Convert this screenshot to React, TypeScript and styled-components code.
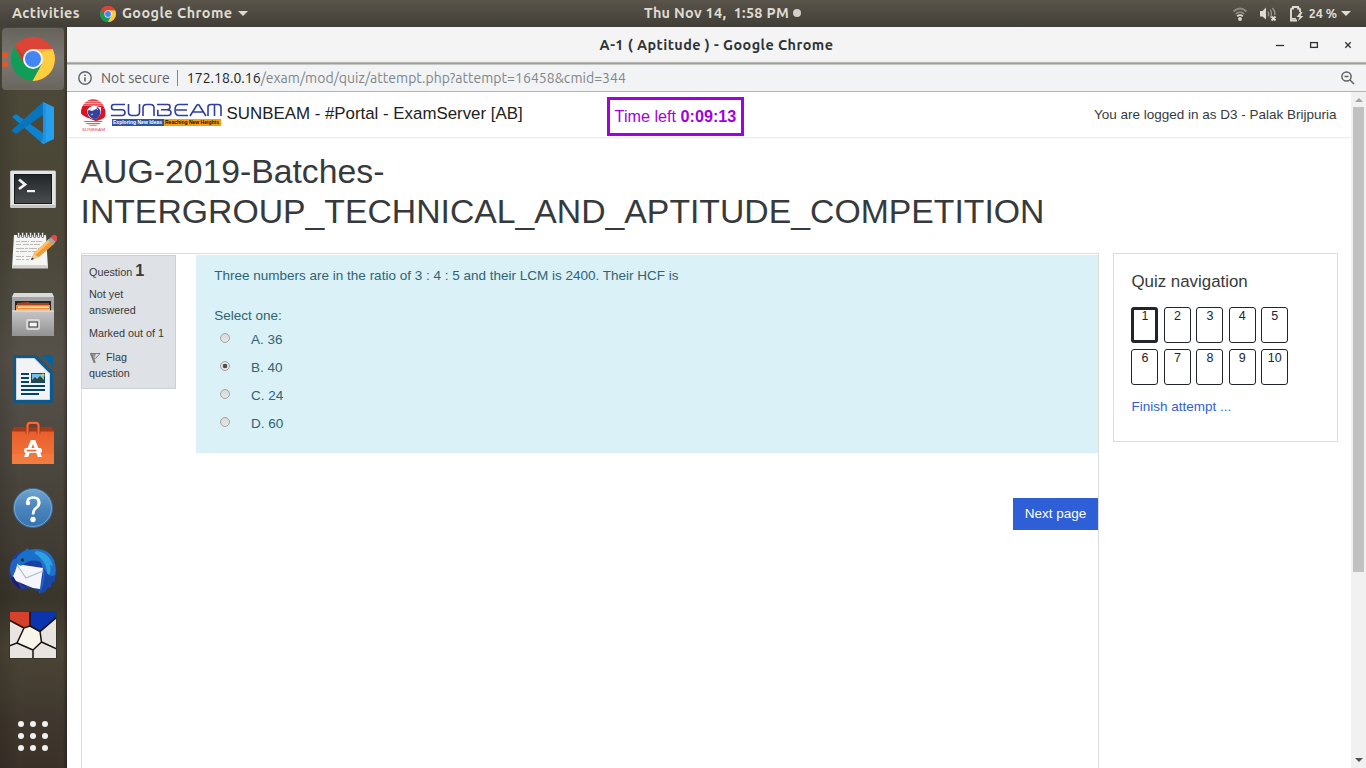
import React from 'react';
import styled, { createGlobalStyle } from 'styled-components';

const Global = createGlobalStyle`
  *, *::before, *::after { box-sizing: border-box; }
  html, body { margin: 0; padding: 0; overflow: hidden; }
`;

const ui = `'Ubuntu', 'Noto Sans', sans-serif`;
const web = `'Liberation Sans', Arial, sans-serif`;

const Desktop = styled.div`
  width: 1366px;
  height: 768px;
  display: flex;
  flex-direction: column;
  overflow: hidden;
  background: #4b473b;
`;

const TopBar = styled.header`
  flex: 0 0 27px;
  display: grid;
  grid-template-columns: 1fr auto 1fr;
  align-items: center;
  padding: 0 15px 0 12px;
  background: linear-gradient(#5a554b, #403e37);
  color: #dfdbd2;
  font: 700 14.4px/25px ${ui};
  white-space: nowrap;
`;

const BarGroup = styled.div<{ $end?: boolean; $shift?: number }>`
  display: flex;
  align-items: center;
  justify-content: ${p => (p.$end ? 'flex-end' : 'flex-start')};
  height: 27px;
  margin-left: ${p => p.$shift ?? 0}px;
`;

const BarText = styled.span<{ $ls?: string; $size?: number }>`
  letter-spacing: ${p => p.$ls ?? '0'};
  font-size: ${p => p.$size ?? 14.4}px;
`;

const Gap = styled.span<{ $w: number }>`
  flex: 0 0 ${p => p.$w}px;
`;

const Caret = styled.i<{ $ml: number }>`
  margin-left: ${p => p.$ml}px;
  border: 5px solid transparent;
  border-top-color: #dfdbd2;
  border-bottom: 0;
`;

const Dot = styled.i`
  width: 8px;
  height: 8px;
  margin: -1px 0 0 4px;
  border-radius: 50%;
  background: #d5d1c9;
`;

const Body = styled.div`
  flex: 1;
  min-height: 0;
  display: flex;
`;

const Dock = styled.nav`
  flex: 0 0 67px;
  display: flex;
  flex-direction: column;
  background:
    linear-gradient(90deg, rgba(0,0,0,.12), transparent 30%, transparent 94%, rgba(0,0,0,.3)),
    linear-gradient(#4e4a3b 0, #4a4737 18%, #4b483a 30%, #56524a 45%, #4f4a42 55%, #423d34 70%, #39352b 77%, #4b4536 84%, #40382e 93%, #3b3129 100%);
`;

const Slot = styled.div<{ $active?: boolean }>`
  flex: 0 0 64px;
  display: flex;
  align-items: center;
  justify-content: center;
  position: relative;
  padding-right: 1px;
  &::before {
    content: '';
    position: absolute;
    inset: 1px 3px 1px 2px;
    border-radius: 4px;
    background: ${p => (p.$active ? 'linear-gradient(#66635a, #7b7974 50%, #68665d)' : 'none')};
  }
  svg { position: relative; display: block; }
`;

const Running = styled.div`
  position: absolute;
  left: 2px;
  top: 25px;
  display: grid;
  gap: 3px;
  i { width: 6px; height: 6px; border-radius: 50%; background: #e95420; }
`;

const AppsGrid = styled.div`
  margin: auto 0 17px 18px;
  display: grid;
  grid-template-columns: repeat(3, 6px);
  gap: 6px;
  i { height: 6px; border-radius: 50%; background: #f2f1ef; }
`;

const Window = styled.main`
  flex: 1;
  min-width: 0;
  display: flex;
  flex-direction: column;
  background: #fff;
`;

const TitleBar = styled.div`
  flex: 0 0 38px;
  display: grid;
  grid-template-columns: 1fr auto 1fr;
  align-items: center;
  padding-bottom: 1px;
  background: linear-gradient(#f4f4f4 0 34px, #e4e4e0 35px, #8f918a 36px, #a9aca4 37px, #dfe1df 38px);
  color: #2e3436;
  font: 700 14.4px/36px ${ui};
`;

const WinTitle = styled.span`
  grid-column: 2;
  letter-spacing: 0.44px;
  line-height: 37px;
  white-space: nowrap;
`;

const WinButtons = styled.div`
  display: flex;
  justify-content: flex-end;
  padding-right: 13px;
`;

const AddressBar = styled.div`
  flex: 0 0 27px;
  display: flex;
  align-items: center;
  padding: 0 11px;
  background: #f1f3f4;
  border-bottom: 1px solid #b3b5b4;
  font: 400 14px/26px ${ui};
  white-space: nowrap;
`;

const Secure = styled.span`
  margin-left: 9px;
  padding-right: 7px;
  color: #5f6368;
  line-height: 16px;
  letter-spacing: 0.06px;
  border-right: 1px solid #80868b;
`;

const Url = styled.span`
  flex: 1;
  margin-left: 9px;
  color: #80868b;
  letter-spacing: 0.03px;
  b { font-weight: 400; color: #202124; }
`;

const Viewport = styled.div`
  flex: 1;
  min-height: 0;
  display: flex;
`;

const Page = styled.div`
  flex: 1;
  min-width: 0;
  display: flex;
  flex-direction: column;
  font: 400 13.5px/20.25px ${web};
  color: #373a3c;
`;

const SiteHeader = styled.div`
  flex: 0 0 45px;
  display: flex;
  align-items: center;
  padding: 0 14.4px 0 12px;
  background: #fff;
  box-shadow: 0 1px 2px rgba(0, 0, 0, 0.1);
`;

const SiteName = styled.span`
  width: 380.4px;
  margin-left: 3.6px;
  font-size: 16.875px;
  color: #212121;
`;

const Timer = styled.div`
  width: 137px;
  height: 39px;
  margin-top: 3px;
  text-align: center;
  border: 3px solid #a200e2;
  color: #a200e2;
  font-size: 16.2px;
  line-height: 32px;
  white-space: nowrap;
`;

const UserInfo = styled.span`
  margin: 2px 0 0 auto;
`;

const Heading = styled.h1`
  margin: 14px 14px 0 13.5px;
  font-weight: 400;
  font-size: 33.75px;
  line-height: 40px;
`;

const Columns = styled.div`
  flex: 1;
  min-height: 0;
  display: flex;
  align-items: flex-start;
  gap: 14px;
  margin-top: 22px;
  padding: 0 13px 0 14px;
`;

const Content = styled.section`
  flex: 0 0 1018px;
  align-self: stretch;
  border: 1px solid #dddddd;
  border-bottom: 0;
  padding-top: 1px;
`;

const Question = styled.div`
  display: flex;
  align-items: flex-start;
`;

const Info = styled.div`
  flex: 0 0 95px;
  height: 134px;
  margin-left: -1px;
  padding: 5px 7px;
  background: #dee2e6;
  border: 1px solid #cad0d7;
  font-size: 10.8px;
  line-height: 16px;
`;

const InfoLine = styled.div<{ $mt?: number }>`
  margin-top: ${p => p.$mt ?? 0}px;
  white-space: nowrap;
  b { font-size: 16.2px; line-height: 19px; }
  svg { vertical-align: -3px; margin-right: 4px; }
`;

const Formulation = styled.div`
  flex: 1;
  height: 198px;
  margin-left: 20px;
  padding: 11px 18.3px;
  background: #daf1f8;
  color: #2f6473;
`;

const Prompt = styled.div<{ $mt?: number }>`
  margin-top: ${p => p.$mt ?? 0}px;
  line-height: 20px;
`;

const Answer = styled.label`
  display: flex;
  align-items: center;
  height: 28px;
  padding-left: 5.7px;
`;

const Radio = styled.span<{ $on?: boolean }>`
  width: 10px;
  height: 10px;
  margin: -4px 21px 0 0;
  border-radius: 50%;
  border: 1px solid #a3a3a3;
  background: ${p => (p.$on ? 'radial-gradient(circle, #505050 0 2px, #e4e4e4 2.6px)' : 'linear-gradient(#dadada, #e6e6e6)')};
`;

const NextRow = styled.div`
  display: flex;
  justify-content: flex-end;
  margin-top: 45px;
`;

const NextButton = styled.button`
  width: 85px;
  height: 32px;
  padding: 0;
  border: 0;
  background: #2f5fd7;
  color: #fff;
  font: 400 13.5px/32px ${web};
`;

const NavCard = styled.aside`
  flex: 0 0 225px;
  height: 189px;
  border: 1px solid #dddddd;
  padding: 17px 17.5px;
`;

const NavTitle = styled.h5`
  margin: 0 0 15px;
  font-weight: 400;
  font-size: 16.875px;
  line-height: 21px;
`;

const NavGrid = styled.div`
  display: grid;
  grid-template-columns: repeat(5, 27px);
  gap: 6px 5.45px;
  margin-left: -0.3px;
`;

const NavCell = styled.a<{ $current?: boolean }>`
  height: 36px;
  border: ${p => (p.$current ? 3 : 1)}px solid #212529;
  border-radius: 3px;
  padding-left: 0.6px;
  text-align: center;
  font-size: 12.5px;
  line-height: ${p => (p.$current ? 13 : 17)}px;
  color: #212529;
`;

const Finish = styled.a`
  display: block;
  margin-top: 12px;
  color: #2f5fd7;
`;

const Scrollbar = styled.div`
  flex: 0 0 15px;
  display: flex;
  flex-direction: column;
  align-items: center;
  padding: 6px 0;
  background: #f1f1f1;
`;

const Arrow = styled.i<{ $down?: boolean }>`
  border: 4px solid transparent;
  ${p => (p.$down ? 'border-top-color: #505050; border-bottom: 0; margin-top: auto;' : 'border-bottom-color: #a3a3a3; border-top: 0;')}
`;

const Thumb = styled.div`
  width: 11px;
  height: 465px;
  margin-top: 5px;
  background: #c1c1c1;
`;

const ChromeIcon = ({ size, id }: { size: number; id: string }) => (
  <svg width={size} height={size} viewBox="2 2 44 44">
    <defs>
      <clipPath id={id}><circle cx="24" cy="24" r="22" /></clipPath>
    </defs>
    <g clipPath={`url(#${id})`}>
      <rect width="48" height="48" fill="#db4437" />
      <path d="M24 14H48V48H21L32.7 29Z" fill="#ffcd40" />
      <path d="M5 10L15.3 29L24 34L32.7 29L22.5 48H0V10Z" fill="#0f9d58" />
      <path d="M6.500 11L24 14L15.3 29Z" fill="#c53929" />
      <path d="M0 0H48V14H24L14 20L6 11Z" fill="#db4437" />
      <path d="M24 14H44L32 18Z" fill="#e5a42b" opacity=".5" />
    </g>
    <circle cx="24" cy="24" r="10" fill="#f4f4f4" />
    <circle cx="24" cy="24" r="8" fill="#4285f4" />
  </svg>
);

const Icon = ({ children }: { children: React.ReactNode }) => (
  <svg width="48" height="48" viewBox="0 0 48 48">{children}</svg>
);

const VsCode = () => (
  <Icon>
    <path d="M3 18L7 15L34 34V45Z" fill="#0b83cd" />
    <path d="M3 31L34 3V16L7 35L3 32Z" fill="#0874bb" />
    <path d="M34 3L45 8V40L34 45Z" fill="#26a0ee" />
    <path d="M34 3L37 4.500V44L34 45L32 43L34 40Z" fill="#1f93e0" />
  </Icon>
);

const Terminal = () => (
  <Icon>
    <defs>
      <linearGradient id="term" x2="0" y2="1"><stop stopColor="#22272a" /><stop offset="1" stopColor="#4a4c4d" /></linearGradient>
    </defs>
    <rect x="1" y="7.500" width="46" height="37.500" rx="1.500" fill="#c4c5c6" />
    <rect x="2" y="8" width="44" height="34" fill="#e3e4e4" />
    <rect x="5" y="11" width="38" height="30" fill="#15191b" />
    <rect x="6" y="12" width="36" height="28" fill="url(#term)" />
    <path d="M10 16.500L16 21.500L10 26" fill="none" stroke="#f0f0f0" strokeWidth="2.800" />
    <rect x="18" y="27" width="8" height="2.200" fill="#f4f4f4" />
  </Icon>
);

const Notepad = () => (
  <Icon>
    <path d="M5 8H37L39 41H3Z" fill="#f5f5f3" />
    <path d="M3 38H39V41.500H3Z" fill="#d2d2ce" />
    <g stroke="#b4b4b1" strokeWidth=".9">
      <path d="M7 14.500H20M22 14.500H34" strokeDasharray="4 1 6 1" />
      <path d="M7 17.500H12M14 17.500H31" strokeDasharray="6 1 3 1" />
      <path d="M7 21.500H33" strokeDasharray="8 1 3 1" />
      <path d="M7 24.500H28" strokeDasharray="3 1 7 1" />
      <path d="M7 29.500H25M7 32.500H20" strokeDasharray="5 1 2 2" />
    </g>
    <g stroke="#55565a" strokeWidth="1" fill="#eee">
      {[8, 12, 16, 20, 24, 28, 32].map(x => <rect key={x} x={x + 0.5} y="5.500" width="2.200" height="5" rx="1" />)}
    </g>
    <path d="M22 33L25 26L40 12L45 17L30 30Z" fill="#f39a34" />
    <path d="M25 26L40 12L42 14L26.500 28Z" fill="#ffc062" />
    <path d="M22 33L25 26L27 28.500L30 30Z" fill="#e8cda0" />
    <path d="M22 33L23 30.500L25 32Z" fill="#222" />
    <path d="M39 13L42 10L47 14.500L44 18Z" fill="#9fa5a8" />
    <path d="M42 10Q45 6 48 9.500Q49 13 46.500 15Z" fill="#e44b4b" />
  </Icon>
);

const Files = () => (
  <Icon>
    <defs>
      <linearGradient id="fil" x2="0" y2="1"><stop stopColor="#c6c6c6" /><stop offset="1" stopColor="#929292" /></linearGradient>
    </defs>
    <path d="M5 2H43L45 6V45H3V6Z" fill="#a4a4a4" />
    <path d="M5 2H43L45 6H3Z" fill="#dadada" />
    <rect x="6" y="10" width="36" height="11" fill="#2a2522" />
    <path d="M8 12L19 11L21 12H40V20H8Z" fill="#a8441c" />
    <path d="M7 14H41V21H7Z" fill="#f08a2f" />
    <rect x="9" y="15.500" width="31" height="1.400" fill="#ffe9c4" />
    <rect x="7" y="18" width="34" height="1.500" fill="#f9b864" />
    <path d="M3 19.500H45V43Q45 45 43 45H5Q3 45 3 43Z" fill="url(#fil)" />
    <rect x="3" y="19.500" width="42" height="1.200" fill="#dedede" />
    <rect x="17" y="28" width="14" height="11" rx="2" fill="#d9d9d9" />
    <rect x="20" y="31" width="8.500" height="5" fill="#f4f4f4" stroke="#55575a" strokeWidth="1.300" />
  </Icon>
);

const Writer = () => (
  <Icon>
    <path d="M6 0H27L44 17V46Q44 48 42 48H6Q4 48 4 46V2Q4 0 6 0Z" fill="#0b5a8e" />
    <path d="M32 0H42Q44 0 44 2V12Z" fill="#05639f" />
    <path d="M7 3H25.500L41 18.500V45H7Z" fill="#d2d5d9" />
    <path d="M8 4H25L40 19V44H8Z" fill="#f1f3f5" />
    <path d="M12 19H20M12 23H20M12 27H20M12 31H36M12 35H36M12 39H30" stroke="#07426b" strokeWidth="2" />
    <rect x="22" y="18" width="14" height="10" fill="#0b4c78" />
    <rect x="23" y="19" width="12" height="8" fill="#72bfea" />
    <path d="M23 27V25L26 22L28 24L31 21L35 25V27Z" fill="#34433e" />
    <circle cx="34" cy="20" r="1.600" fill="#e6c64c" />
  </Icon>
);

const Software = () => (
  <Icon>
    <defs>
      <linearGradient id="sof" x2="0" y2="1"><stop stopColor="#e95e2c" /><stop offset="1" stopColor="#f37a3d" /></linearGradient>
    </defs>
    <path d="M5 8H43L45 12V45H3V12Z" fill="#a53a18" />
    <path d="M3 12.500H45V45H3Z" fill="url(#sof)" />
    <path d="M3 35H45V45H3Z" fill="#f58043" opacity=".45" />
    <path d="M18.500 15V6.500Q18.500 4 21 4H27Q29.500 4 29.500 6.500V15" fill="none" stroke="#8a3318" strokeWidth="3.500" />
    <path d="M18.500 15V6.500Q18.500 3.800 21 3.800H27Q29.500 3.800 29.500 6.500V15" fill="none" stroke="#ef6b39" strokeWidth="2.200" />
    <path d="M15 38L21.800 21H26.200L33 38H28.800L24 25L19.200 38Z" fill="#fff" />
    <rect x="15" y="29" width="18" height="5" rx="2.200" fill="#fff" />
    <rect x="17.500" y="30.700" width="10" height="1.700" rx=".8" fill="#ef6a35" />
  </Icon>
);

const Help = () => (
  <Icon>
    <defs>
      <linearGradient id="hlp" x2="0" y2="1"><stop stopColor="#72a6cf" /><stop offset=".5" stopColor="#4a85bd" /><stop offset="1" stopColor="#3572ad" /></linearGradient>
    </defs>
    <circle cx="24" cy="25" r="19.500" fill="url(#hlp)" stroke="#3a6b9b" />
    <circle cx="24" cy="25" r="18.500" fill="none" stroke="#7fb0d6" strokeWidth=".8" />
    <path d="M18.500 19.500Q18.500 14.500 24 14.500Q30.200 14.500 30.200 19.500Q30.200 23 27 25Q24.200 27 24 31.500" fill="none" stroke="#fff" strokeWidth="2.600" />
    <circle cx="19" cy="20" r="2.200" fill="#fff" />
    <path d="M27.500 15.500Q32 17 31.300 20.500Q31 23 27.500 25.500Q29.500 20 27.500 15.500Z" fill="#fff" />
    <circle cx="24" cy="36.500" r="2.700" fill="#fff" />
  </Icon>
);

const Thunderbird = () => (
  <Icon>
    <path d="M3 13Q6 5 15 4L19 1L20 3Q38 -1 45 13Q51 28 42 38Q38 44 31 46L24 41L12 42Q3 38 1 31Q-2 22 3 13Z" fill="#1a3fa0" />
    <path d="M20 3Q38 -1 45 13Q49 25 44 35L42 32Q38 42 30 47L34 30L33 18Q28 8 15 11Q14 6 20 3Z" fill="#2070cc" />
    <path d="M27 4Q40 5 44 19L41 18Q43 26 38 31Q40 13 24 8Z" fill="#2da1df" />
    <path d="M1 25Q2 39 12 42L8 34L18 41L15 37L24 41L30 44L7 33Z" fill="#241c6e" />
    <path d="M8 15L14 18L34 21L31 42L24 41L7 34L4 29Z" fill="#f5f6fb" />
    <path d="M8 18L17 31L34 24" fill="none" stroke="#b5b9c5" strokeWidth="1.200" />
    <path d="M5 17Q7 8 15 4L19 1L20 4Q29 6 34 15Q22 11 15 17Q11 21 8 16Z" fill="#1970c8" />
    <path d="M3 14Q7 9 9 15Q7 24 3 31Q-1 22 3 14Z" fill="#2463bd" />
    <circle cx="13.500" cy="13" r="1.800" fill="#2a2f42" />
    <path d="M34 20Q38 31 30 47L37 44L38 41L42 40L42 36L46 34L46 28Q40 32 34 20Z" fill="#1749ac" />
  </Icon>
);

const Tiles = () => (
  <Icon>
    <rect width="48" height="48" fill="#e9e4df" />
    <path d="M0 0H21V15L15 18L0 10Z" fill="#d5412a" />
    <path d="M21 0H48V6L31 21L21 15Z" fill="#0b35ac" />
    <path d="M15 17L21 15L31 21V31L24 39L8 32Z" fill="#f8f5ea" />
    <path d="M21 0V15L15 17L0 9M48 6L31 20.500L21 15M15 17L8 32L0 35M8 32L24 39V48M24 39L32.500 31L31 20.500M32.500 31L48 38" fill="none" stroke="#14110f" strokeWidth="1.500" />
    <rect x=".5" y=".5" width="47" height="47" fill="none" stroke="#38332b" />
  </Icon>
);

const Wifi = () => (
  <svg width="16" height="16" viewBox="0 0 16 16" fill="none" strokeWidth="1.800">
    <path d="M1.500 5.500Q8 -.5 14.500 5.500" stroke="#8b887f" />
    <path d="M3.800 8Q8 4.300 12.200 8" stroke="#8b887f" />
    <path d="M5.200 10.200Q8 8 10.800 10.200" stroke="#dfdbd2" />
    <circle cx="8" cy="13" r="1.900" fill="#dfdbd2" />
  </svg>
);

const Speaker = () => (
  <svg width="18" height="16" viewBox="0 0 18 16" fill="none">
    <path d="M1 5H3.500L7 1.500V13.500L3.500 10.500H1Z" fill="#dfdbd2" />
    <path d="M9 5.500Q10.300 8 9 10.500M11.300 3.500Q13.500 8 11.300 12M13.500 2Q16.500 5.500 15.800 9" stroke="#99958c" strokeWidth="1.300" />
    <path d="M12.500 10.500L16.500 14.500M16.500 10.500L12.500 14.500" stroke="#dfdbd2" strokeWidth="1.800" />
  </svg>
);

const Battery = () => (
  <svg width="15" height="17" viewBox="0 0 15 17" fill="none">
    <path d="M8 15.500H2V4.500Q2 3.500 3 3.500H4V2H9V3.500H10Q11 3.500 11 4.500V7" stroke="#dfdbd2" strokeWidth="1.900" />
    <path d="M11.500 7L7.500 12H10.500L9 16L14.500 11H11.500L13.500 7Z" fill="#dfdbd2" />
    <path d="M3 13H7V14.500H3Z" fill="#dfdbd2" />
  </svg>
);

const WindowControls = () => (
  <svg width="80" height="14" viewBox="0 0 80 14" fill="none" stroke="#2e3436">
    <path d="M3 6.500H11" strokeWidth="1.300" />
    <rect x="37.600" y="3.600" width="6.800" height="4.800" strokeWidth="1.300" />
    <path d="M72.300 3.300L77.700 8.700M77.700 3.300L72.300 8.700" strokeWidth="1.300" />
  </svg>
);

const InfoIcon = () => (
  <svg width="14" height="14" viewBox="0 0 14 14" fill="none" stroke="#5f6368" strokeWidth="1.400">
    <circle cx="7" cy="7" r="6.200" />
    <path d="M7 6.200V10.500M7 3.500V5" strokeWidth="1.600" />
  </svg>
);

const ZoomOut = () => (
  <svg width="14" height="14" viewBox="0 0 14 14" fill="none" stroke="#5f6368" strokeWidth="1.500">
    <circle cx="5.500" cy="5.500" r="4.600" />
    <path d="M9 9L13 13M3.500 5.500H7.500" />
  </svg>
);

const Logo = () => (
  <svg width="144" height="36" viewBox="0 0 144 36">
    <defs><clipPath id="globe"><ellipse cx="14.200" cy="15.500" rx="12.200" ry="13.300" /></clipPath></defs>
    <g clipPath="url(#globe)">
      <rect width="28" height="31" fill="#fff" />
      <rect x="4" y="2" width="20" height="2.300" fill="#e33a40" />
      <path d="M3 5.500H25M2 7.500H26" stroke="#e6575c" strokeWidth="1.300" />
      <path d="M1 8.500H24L26 12Q20 8.500 13 9.500Q8 11 8 14Q8.500 18 15 21L17 24L12 22Q3 19 1 15Z" fill="#df1220" />
      <path d="M22 10L28 13V18Q25 22 17 24L12 22Q20 20 22 16Z" fill="#df1220" />
      <path d="M4 24.500H24M6 26.500H22M8 28.300H20" stroke="#e6575c" strokeWidth="1.200" />
    </g>
    <circle cx="15" cy="15.300" r="6.500" fill="#fff" />
    <path d="M8.500 15Q9 13 10 13L13 14L17 12L18 10Q22 12 21.500 16Q20 22 15 22Q10 21 8.500 15Z" fill="#35439e" />
    <path d="M11 12L13 14M17 11L19 13M12 18L14 17" stroke="#ccd1ef" />
    <text x="3" y="33.500" fontFamily="'Liberation Sans', sans-serif" fontSize="4.300" textLength="23" lengthAdjust="spacingAndGlyphs" fill="#df4c50">SUNBEAM</text>
    <g transform="translate(0 2)" fill="none" stroke="#303ea4" strokeWidth="1.600" strokeLinejoin="round">
      <path d="M46 5.500H35Q32.500 5.500 32.500 8Q32.500 10.800 35 10.800H43Q46 10.800 46 13.500Q46 16.500 43 16.500H32" />
      <path d="M49.500 5V13Q49.500 16.500 53 16.500H57Q60.500 16.500 60.500 13V5" />
      <path d="M64 17V9Q64 5.500 67.500 5.500H71.500Q75 5.500 75 9V17" />
      <path d="M78 5.500H89Q91 5.500 91 8Q91 10.800 88 10.800H82M78.800 10.800V16.500H89Q92 16.500 92 13.500Q92 10.800 88 10.800" />
      <path d="M109 5.500H100Q96 5.500 96 11Q96 16.500 100 16.500H109M97 11H108" />
      <path d="M111 17L118 6Q119 5 120 6L127 17M114 13H124" />
      <path d="M129 17V8Q129 5.500 132 5.500H139Q142 5.500 142 8V17M135.500 6V17" />
    </g>
    <rect x="33" y="22" width="52" height="7" fill="#2c56a4" />
    <rect x="85" y="22" width="57" height="7" fill="#f89b10" />
    <g fontFamily="'Liberation Sans', sans-serif" fontSize="5.600" fontWeight="700">
      <text x="34" y="27.400" fill="#fff" textLength="49" lengthAdjust="spacingAndGlyphs">Exploring New Ideas</text>
      <text x="86" y="27.400" fill="#17130c" textLength="54" lengthAdjust="spacingAndGlyphs">Reaching New Heights</text>
    </g>
  </svg>
);

const Flag = () => (
  <svg width="13" height="13" viewBox="0 0 13 13" fill="none" stroke="#7b7b7b" strokeWidth="1">
    <path d="M2 2.500L11 2.500L6.500 7.500L4.500 7" />
    <path d="M1.800 2L5.800 11.800" strokeWidth="2.100" />
    <path d="M3 3L7 3L5.500 7Z" fill="#929292" stroke="none" />
  </svg>
);

const answers = ['A. 36', 'B. 40', 'C. 24', 'D. 60'];

export default function App() {
  return (
    <>
      <Global />
      <Desktop>
        <TopBar>
          <BarGroup>
            <BarText $ls="0.38px">Activities</BarText>
            <Gap $w={20} />
            <ChromeIcon size={16} id="chrome-small" />
            <Gap $w={6} />
            <BarText $ls="0.47px">Google Chrome</BarText>
            <Caret $ml={5} />
          </BarGroup>
          <BarGroup $shift={82}>
            <BarText $ls="0.3px">Thu Nov 14,&nbsp; 1:58 PM</BarText>
            <Dot />
          </BarGroup>
          <BarGroup $end>
            <Wifi />
            <Gap $w={11} />
            <Speaker />
            <Gap $w={12} />
            <Battery />
            <Gap $w={5} />
            <BarText $size={12.5}>24 %</BarText>
            <Caret $ml={4} />
          </BarGroup>
        </TopBar>
        <Body>
          <Dock>
            <Slot $active>
              <ChromeIcon size={44} id="chrome-dock" />
              <Running><i /><i /></Running>
            </Slot>
            <Slot><VsCode /></Slot>
            <Slot><Terminal /></Slot>
            <Slot><Notepad /></Slot>
            <Slot><Files /></Slot>
            <Slot><Writer /></Slot>
            <Slot><Software /></Slot>
            <Slot><Help /></Slot>
            <Slot><Thunderbird /></Slot>
            <Slot><Tiles /></Slot>
            <AppsGrid>{Array.from({ length: 9 }, (_, i) => <i key={i} />)}</AppsGrid>
          </Dock>
          <Window>
            <TitleBar>
              <WinTitle>A-1 ( Aptitude ) - Google Chrome</WinTitle>
              <WinButtons><WindowControls /></WinButtons>
            </TitleBar>
            <AddressBar>
              <InfoIcon />
              <Secure>Not secure</Secure>
              <Url><b>172.18.0.16</b>/exam/mod/quiz/attempt.php?attempt=16458&amp;cmid=344</Url>
              <ZoomOut />
            </AddressBar>
            <Viewport>
              <Page>
                <SiteHeader>
                  <Logo />
                  <SiteName>SUNBEAM - #Portal - ExamServer [AB]</SiteName>
                  <Timer>Time left <b>0:09:13</b></Timer>
                  <UserInfo>You are logged in as D3 - Palak Brijpuria</UserInfo>
                </SiteHeader>
                <Heading>AUG-2019-Batches-<br />INTERGROUP_TECHNICAL_AND_APTITUDE_COMPETITION</Heading>
                <Columns>
                  <Content>
                    <Question>
                      <Info>
                        <InfoLine>Question <b>1</b></InfoLine>
                        <InfoLine $mt={6}>Not yet<br />answered</InfoLine>
                        <InfoLine $mt={7}>Marked out of 1</InfoLine>
                        <InfoLine $mt={8}><Flag />Flag<br />question</InfoLine>
                      </Info>
                      <Formulation>
                        <Prompt>Three numbers are in the ratio of 3 : 4 : 5 and their LCM is 2400. Their HCF is</Prompt>
                        <Prompt $mt={20}>Select one:</Prompt>
                        {answers.map((a, i) => (
                          <Answer key={a}><Radio $on={i === 1} />{a}</Answer>
                        ))}
                      </Formulation>
                    </Question>
                    <NextRow><NextButton>Next page</NextButton></NextRow>
                  </Content>
                  <NavCard>
                    <NavTitle>Quiz navigation</NavTitle>
                    <NavGrid>
                      {Array.from({ length: 10 }, (_, i) => (
                        <NavCell key={i} $current={i === 0}>{i + 1}</NavCell>
                      ))}
                    </NavGrid>
                    <Finish>Finish attempt ...</Finish>
                  </NavCard>
                </Columns>
              </Page>
              <Scrollbar>
                <Arrow />
                <Thumb />
                <Arrow $down />
              </Scrollbar>
            </Viewport>
          </Window>
        </Body>
      </Desktop>
    </>
  );
}
